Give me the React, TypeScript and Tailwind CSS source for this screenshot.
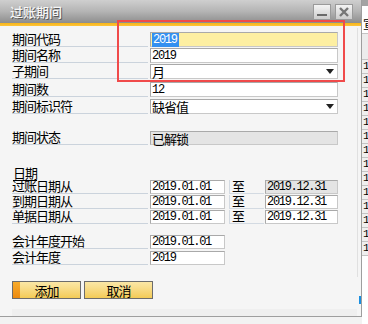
import { ReactNode } from "react";

const cjk = "font-['Noto_Sans_CJK_SC',sans-serif] text-[13px] tracking-[-1px]";
const mono = "font-['Liberation_Mono',monospace] text-[12px] tracking-[-1.3px]";

function Label({ text, className = "" }: { text: string; className?: string }) {
  return (
    <div
      className={`flex w-[136px] shrink-0 items-end border-b border-[#cbd3dc] pb-[1px] leading-[12px] text-black ${cjk} ${className}`}
    >
      {text}
    </div>
  );
}

function Box({
  children,
  className = "",
}: {
  children?: ReactNode;
  className?: string;
}) {
  return (
    <div
      className={`flex h-full items-center border border-t-[#a9a9a9] border-l-[#a9a9a9] border-r-[#c8c8c8] border-b-[#c8c8c8] px-[1px] leading-none text-black ${className}`}
    >
      {children}
    </div>
  );
}

function Arrow() {
  return (
    <svg width="8" height="5" viewBox="0 0 8 5" className="ml-auto mr-[2px]">
      <path d="M0 0 H8 L4 5 Z" fill="#222" />
    </svg>
  );
}

function DateRow({
  label,
  from,
  to,
  grayTo,
  className = "",
}: {
  label: string;
  from: string;
  to: string;
  grayTo?: boolean;
  className?: string;
}) {
  return (
    <div className={`flex h-[14px] ${className}`}>
      <Label text={label} />
      <div className="ml-[2px] w-[75px] shrink-0">
        <Box className={`bg-white ${mono}`}>{from}</Box>
      </div>
      <div
        className={`ml-[4px] flex w-[35px] shrink-0 items-end border-b border-l border-[#d3dae2] pb-[1px] pl-[2px] leading-[12px] ${cjk}`}
      >
        至
      </div>
      <div className="ml-[1px] w-[73px] shrink-0">
        <Box className={`${grayTo ? "bg-[#e4e4e4]" : "bg-white"} ${mono}`}>{to}</Box>
      </div>
    </div>
  );
}

export default function App() {
  return (
    <div className="relative flex h-[324px] w-[368px] overflow-hidden bg-[#f2f2f2]">
      {/* dialog window */}
      <div className="flex h-[317px] w-[362px] shrink-0 flex-col border-r border-b border-[#9e9e9e] bg-[#f5f5f5]">
        {/* title bar */}
        <div className="flex h-[23px] items-center bg-gradient-to-b from-[#cfcfcf] via-[#b4b4b4] to-[#8d8d8d] pl-[10px] pr-[8px]">
          <span
            className="font-['Noto_Sans_CJK_SC',sans-serif] text-[13px] font-medium leading-none text-[#f6f6f6] [text-shadow:1px_1px_0_#5a5a5a]"
          >
            过账期间
          </span>
          <div className="ml-auto flex gap-[4px]">
            <div className="flex h-[16px] w-[18px] items-end justify-center border border-[#9a9a9a] bg-gradient-to-b from-[#f4f4f4] to-[#cdcdcd] pb-[3px]">
              <div className="h-[2px] w-[10px] bg-[#6a6a6a]" />
            </div>
            <div className="flex h-[16px] w-[18px] items-center justify-center border border-[#9a9a9a] bg-gradient-to-b from-[#f4f4f4] to-[#cdcdcd]">
              <svg width="10" height="10" viewBox="0 0 10 10">
                <path d="M1 1 L9 9 M9 1 L1 9" stroke="#767676" strokeWidth="2.4" />
              </svg>
            </div>
          </div>
        </div>
        <div className="h-[3px] bg-gradient-to-b from-[#f9b512] to-[#fcc43a]" />

        {/* body */}
        <div className="flex flex-1">
          <div className="flex flex-1 flex-col pl-[12px]">
            <div className="mt-[6px] flex h-[15px]">
              <Label text="期间代码" />
              <div className="ml-[2px] w-[188px] shrink-0">
                <Box className={`bg-[#fdefa2] ${mono}`}>
                  <span className="bg-[#3390f0] py-[1px] pl-[1px] pr-[2px] text-white">2019</span>
                </Box>
              </div>
            </div>
            <div className="mt-[1px] flex h-[15px]">
              <Label text="期间名称" />
              <div className="ml-[2px] w-[188px] shrink-0">
                <Box className={`bg-white ${mono}`}>2019</Box>
              </div>
            </div>
            <div className="mt-[1px] flex h-[15px]">
              <Label text="子期间" />
              <div className="ml-[2px] w-[188px] shrink-0">
                <Box className={`bg-white ${cjk}`}>
                  月
                  <Arrow />
                </Box>
              </div>
            </div>
            <div className="mt-[3px] flex h-[15px]">
              <Label text="期间数" />
              <div className="ml-[2px] w-[188px] shrink-0">
                <Box className={`bg-white ${mono}`}>12</Box>
              </div>
            </div>
            <div className="mt-[2px] flex h-[15px]">
              <Label text="期间标识符" />
              <div className="ml-[2px] w-[188px] shrink-0">
                <Box className={`bg-white ${cjk}`}>
                  缺省值
                  <Arrow />
                </Box>
              </div>
            </div>

            <div className="mt-[17px] flex h-[14px]">
              <Label text="期间状态" />
              <div className="ml-[2px] w-[188px] shrink-0">
                <Box className={`bg-[#e4e4e4] ${cjk}`}>已解锁</Box>
              </div>
            </div>

            <div className={`mt-[20px] flex h-[14px] items-end leading-[12px] ${cjk}`}>
              <span className="pl-[1px] underline underline-offset-[2px]">日期</span>
            </div>
            <DateRow className="mt-[1px]" label="过账日期从" from="2019.01.01" to="2019.12.31" grayTo />
            <DateRow className="mt-[1px]" label="到期日期从" from="2019.01.01" to="2019.12.31" />
            <DateRow className="mt-[1px]" label="单据日期从" from="2019.01.01" to="2019.12.31" />

            <div className="mt-[11px] flex h-[14px]">
              <Label text="会计年度开始" />
              <div className="ml-[2px] w-[75px] shrink-0">
                <Box className={`bg-white ${mono}`}>2019.01.01</Box>
              </div>
            </div>
            <div className="mt-[2px] flex h-[14px]">
              <Label text="会计年度" />
              <div className="ml-[2px] w-[75px] shrink-0">
                <Box className={`bg-white ${mono}`}>2019</Box>
              </div>
            </div>

            <div className={`mt-[16px] flex gap-[3px] ${cjk}`}>
              <button className="flex h-[18px] w-[69px] border border-[#6c6c6c] bg-gradient-to-b from-[#fbe7a6] to-[#f3cb55]">
                <span className="h-full w-[7px] bg-gradient-to-b from-[#f7ab2a] to-[#ec8a0e]" />
                <span className="flex flex-1 items-center justify-center pr-[7px] leading-none">添加</span>
              </button>
              <button className="flex h-[18px] w-[69px] items-center justify-center border border-[#6c6c6c] bg-gradient-to-b from-[#fbe7a6] to-[#f3cb55] leading-none">
                取消
              </button>
            </div>
            <div className="mt-auto h-[7px] bg-[#efefef]" />
          </div>
          <div className="flex w-[4px] flex-col">
            <div className="mt-[2px] h-[249px] border-l border-[#e0e0e0]" />
            <div className="mt-auto mb-[12px] ml-[2px] h-[8px] w-[2px] bg-[#1a8fe0]" />
          </div>
        </div>
      </div>

      {/* neighbouring window, cut off on the right */}
      <div className="flex flex-1 flex-col bg-white font-['Noto_Sans_CJK_SC',sans-serif] text-[12px] leading-none">
        <div className="h-[6px] bg-[#a3a3a3]" />
        <div className="mt-[12px] pl-[1px]">宣</div>
        <div className="mt-[3px] h-[26px] border-t border-[#c4c4c4] bg-[#ececec]" />
        {Array.from({ length: 14 }).map((_, i) => (
          <div
            key={i}
            className="flex h-[14px] items-center border-t border-[#c4c4c4] bg-[#efefef] pl-[1px] font-['Liberation_Mono',monospace] text-[11px]"
          >
            1
          </div>
        ))}
        <div className="border-t border-[#c4c4c4]" />
      </div>

      {/* red annotation frame */}
      <div className="absolute left-[117px] top-[20px] h-[62px] w-[228px] border-2 border-[#f04a4a]" />
    </div>
  );
}
